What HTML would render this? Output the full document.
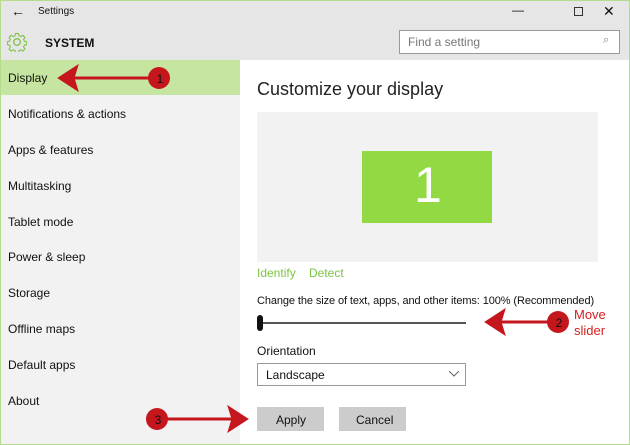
<!DOCTYPE html>
<html><head><style>
*{margin:0;padding:0;box-sizing:border-box}
body{width:630px;height:445px;position:relative;overflow:hidden;font-family:"Liberation Sans",sans-serif;background:#fff}
.frame{position:absolute;left:0;top:0;width:630px;height:445px;border:1px solid #b5dc8c;z-index:10;pointer-events:none}
.top{position:absolute;left:0;top:0;width:630px;height:60px;background:#e6e6e6}
.side{position:absolute;left:0;top:60px;width:240px;height:385px;background:#f2f2f2}
.sel{position:absolute;left:0;top:60px;width:240px;height:35px;background:#c6e5a0}
.t{position:absolute;font-size:12px;color:#111;white-space:nowrap}
.g{color:#7cc242}
</style></head><body>
<div class="top"></div>
<div class="side"></div>
<div class="sel"></div>
<div class="t" style="left:11px;top:3px;font-size:14px">&#8592;</div>
<div class="t" style="left:38px;top:6px;font-size:10px">Settings</div>
<div class="t" style="left:512px;top:3px;font-size:12px">&#8212;</div>
<div style="position:absolute;left:574px;top:7px;width:9px;height:9px;border:1px solid #333"></div>
<div class="t" style="left:603px;top:3px;font-size:14px">&#10005;</div>
<svg style="position:absolute;left:7px;top:32px" width="20" height="20" viewBox="0 0 20 20"><circle cx="10" cy="10" r="3.3" fill="none" stroke="#7cc242" stroke-width="1.3"/><path d="M8.5 1.5h3l.5 2.3 1.8.8 2-1.3 2.1 2.1-1.3 2 .8 1.8 2.3.5v3l-2.3.5-.8 1.8 1.3 2-2.1 2.1-2-1.3-1.8.8-.5 2.3h-3l-.5-2.3-1.8-.8-2 1.3-2.1-2.1 1.3-2-.8-1.8-2.3-.5v-3l2.3-.5.8-1.8-1.3-2 2.1-2.1 2 1.3 1.8-.8z" fill="none" stroke="#7cc242" stroke-width="1.1" stroke-linejoin="round"/></svg>
<div class="t" style="left:45px;top:36px;font-size:12px;font-weight:bold">SYSTEM</div>
<div style="position:absolute;left:399px;top:30px;width:221px;height:24px;border:1px solid #999;background:#fff"></div>
<div class="t" style="left:408px;top:35px;font-size:12px;color:#777">Find a setting</div>
<div class="t" style="left:603px;top:34px;font-size:11px;color:#888">&#8981;</div>
<div class="t" style="left:8px;top:71px">Display</div>
<div class="t" style="left:8px;top:107px">Notifications &amp; actions</div>
<div class="t" style="left:8px;top:143px">Apps &amp; features</div>
<div class="t" style="left:8px;top:179px">Multitasking</div>
<div class="t" style="left:8px;top:215px">Tablet mode</div>
<div class="t" style="left:8px;top:250px">Power &amp; sleep</div>
<div class="t" style="left:8px;top:286px">Storage</div>
<div class="t" style="left:8px;top:322px">Offline maps</div>
<div class="t" style="left:8px;top:358px">Default apps</div>
<div class="t" style="left:8px;top:394px">About</div>
<div class="t" style="left:257px;top:79px;font-size:18px;color:#222">Customize your display</div>
<div style="position:absolute;left:257px;top:112px;width:341px;height:150px;background:#f2f2f2"></div>
<div style="position:absolute;left:362px;top:151px;width:130px;height:72px;background:#92d944"></div>
<div class="t" style="left:414px;top:156px;font-size:50px;color:#fff;font-weight:100">1</div>
<div class="t g" style="left:257px;top:266px">Identify</div>
<div class="t g" style="left:309px;top:266px">Detect</div>
<div class="t" style="left:257px;top:295px;font-size:11px;letter-spacing:-0.1px">Change the size of text, apps, and other items: 100% (Recommended)</div>
<div style="position:absolute;left:260px;top:322px;width:206px;height:2px;background:#555"></div>
<div style="position:absolute;left:257px;top:315px;width:6px;height:16px;border-radius:3px;background:#111"></div>
<div class="t" style="left:257px;top:344px">Orientation</div>
<div style="position:absolute;left:257px;top:363px;width:209px;height:23px;border:1px solid #999;background:#fff"></div>
<div class="t" style="left:266px;top:368px">Landscape</div>
<svg style="position:absolute;left:449px;top:371px" width="10" height="6"><path d="M0 0l5 5 5-5" fill="none" stroke="#666"/></svg>
<div style="position:absolute;left:257px;top:407px;width:67px;height:24px;background:#cccccc"></div>
<div class="t" style="left:276px;top:413px">Apply</div>
<div style="position:absolute;left:339px;top:407px;width:67px;height:24px;background:#cccccc"></div>
<div class="t" style="left:356px;top:413px">Cancel</div>
<svg style="position:absolute;left:0;top:0" width="630" height="445">
<g fill="#c4161c" stroke="#c4161c">
<line x1="72" y1="78" x2="155" y2="78" stroke-width="3"/>
<path d="M58 78l20-13-4 13 4 13z"/>
<circle cx="159" cy="78" r="11" stroke="none"/>
<line x1="498" y1="322" x2="550" y2="322" stroke-width="3"/>
<path d="M485 322l20-13-4 13 4 13z"/>
<circle cx="558" cy="322" r="11" stroke="none"/>
<line x1="160" y1="419" x2="235" y2="419" stroke-width="3"/>
<path d="M248 419l-20-13 4 13-4 13z"/>
<circle cx="157" cy="419" r="11" stroke="none"/>
</g>
<g font-family="Liberation Sans" font-size="12" text-anchor="middle" fill="#111">
<text x="160" y="83">1</text><text x="559" y="327">2</text><text x="158" y="424">3</text>
</g>
<text x="574" y="319" font-family="Liberation Sans" font-size="13" fill="#d42020">Move</text>
<text x="574" y="335" font-family="Liberation Sans" font-size="13" fill="#d42020">slider</text>
</svg>
<div class="frame"></div>
</body></html>
